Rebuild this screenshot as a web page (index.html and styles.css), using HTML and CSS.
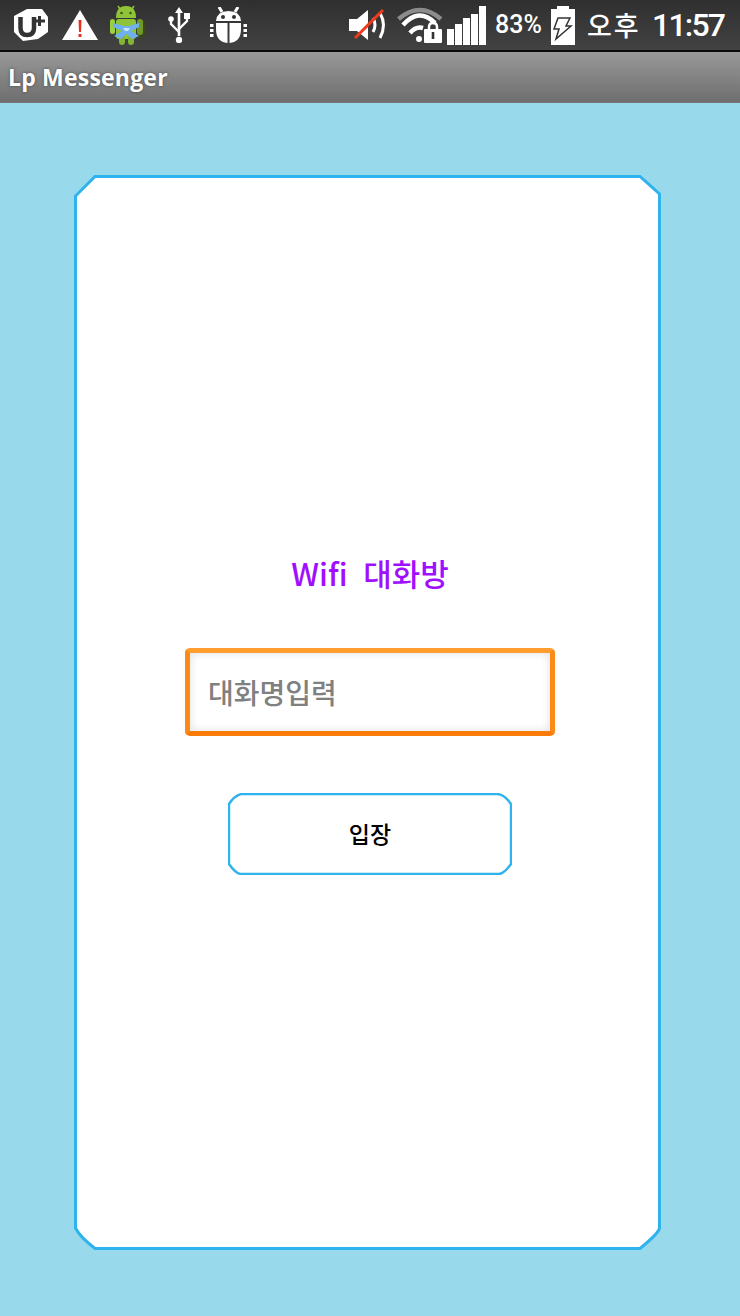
FILE: index.html
```html
<!DOCTYPE html>
<html lang="ko">
<head>
  <meta charset="UTF-8" />
  <title>Lp Messenger</title>
  <link rel="stylesheet" href="styles.css">
</head>
<body>

  <!-- Status bar -->
  <div class="status-bar">
    <div class="status-left">
      <svg class="ic-uplus" viewBox="0 0 36 34">
        <path fill="#fff" d="M1 8 L14 1 L29 1 L35 9 L35 24 L25 31 L10 33 L1 24 Z"/>
        <path fill="none" stroke="#333" stroke-width="4.500" d="M7.500 9 V20 Q7.500 27 14 27 Q21 27 21 20 V9"/>
        <path fill="none" stroke="#333" stroke-width="3" d="M21 13 H32 M26.500 8 V18"/>
      </svg>
      <svg class="ic-warn" viewBox="0 0 36 30">
        <path fill="#fff" d="M18 0 L36 30 H0 Z"/>
        <path fill="#e8321c" d="M16.500 10 H19.500 L19 22 H17 Z M16.500 24 H19.500 V27 H16.500 Z"/>
      </svg>
      <svg class="ic-droid" viewBox="0 0 36 40">
        <ellipse cx="31" cy="24" rx="5" ry="10" fill="#3c4420"/>
        <path fill="#8fc438" d="M6 13 Q6 1 16 1 Q26 1 26 13 Z"/>
        <path fill="none" stroke="#8fc438" stroke-width="1.500" d="M10 4 L8 1 M22 4 L24 1"/>
        <circle cx="11.500" cy="8" r="1.300" fill="#3f5a14"/>
        <circle cx="20.500" cy="8" r="1.300" fill="#3f5a14"/>
        <rect x="6" y="14" width="20" height="20" rx="3" fill="#8fc438"/>
        <rect x="0" y="14" width="5" height="15" rx="2.500" fill="#9ccf42"/>
        <rect x="27" y="14" width="6" height="16" rx="3" fill="#6f9a2a"/>
        <rect x="9" y="30" width="6" height="10" rx="3" fill="#84b232"/>
        <rect x="18" y="30" width="6" height="10" rx="3" fill="#84b232"/>
        <path fill="#6fb0ee" d="M3 18 L14 21 L19 21 L29 18 L29 22 L21 26 L29 31 L22 34 L16.500 29 L11 34 L4 31 L12 26 L3 22 Z"/>
        <path fill="#cfe4fa" d="M13 23 H20 L18 26 H15 Z"/>
      </svg>
      <svg class="ic-usb" viewBox="0 0 22 36">
        <path fill="#fff" d="M11 0 L15 6 H12.300 V29 H9.700 V6 H7 Z"/>
        <circle cx="11" cy="33" r="3.200" fill="#fff"/>
        <circle cx="3" cy="12" r="2.800" fill="#fff"/>
        <rect x="16" y="6" width="6" height="6" fill="#fff"/>
        <path fill="none" stroke="#fff" stroke-width="2.400" d="M3 13 V17 L11 25 M19 11 V14 L11 22"/>
      </svg>
      <svg class="ic-bug" viewBox="0 0 37 36">
        <path fill="#fff" d="M6 14 Q7 4 18.500 4 Q30 4 31 14 Z"/>
        <path fill="none" stroke="#fff" stroke-width="3" d="M12 5 L9 0 M25 5 L28 0"/>
        <circle cx="13" cy="10" r="2" fill="#333"/>
        <circle cx="24" cy="10" r="2" fill="#333"/>
        <path fill="#fff" d="M6 16 H17.500 V36 Q6 35 6 22 Z M31 16 H19.500 V36 Q31 35 31 22 Z"/>
        <path fill="#fff" d="M0 17 H3.500 V20 H0 Z M0 22 H3.500 V25 H0 Z M0 27 H3.500 V30 H0 Z M33.500 17 H37 V20 H33.500 Z M33.500 22 H37 V25 H33.500 Z M33.500 27 H37 V30 H33.500 Z"/>
      </svg>
    </div>
    <div class="status-right">
      <svg class="ic-sound" viewBox="0 0 40 32">
        <path fill="#fff" d="M0 10 H8 L19 1 V31 L8 22 H0 Z"/>
        <path fill="none" stroke="#fff" stroke-width="3" d="M24 9 Q28 16 24 23 M31 4 Q38 16 31 29"/>
        <path fill="none" stroke="#f0391c" stroke-width="3" d="M6 29 L34 1"/>
      </svg>
      <svg class="ic-wifi" viewBox="0 0 46 36">
        <path fill="none" stroke="#8c8c8c" stroke-width="4.500" d="M1.500 12 Q23 -6 44 12"/>
        <path fill="none" stroke="#fff" stroke-width="4.500" d="M6 18 Q22 0 38 16 M13 26 Q19 19 26 21"/>
        <circle cx="22" cy="32" r="3" fill="#fff"/>
        <path fill="none" stroke="#fff" stroke-width="2.500" d="M32 23 V20 Q32 16 36 16 Q40 16 40 20 V23"/>
        <rect x="27" y="22" width="18" height="14" rx="1" fill="#fff"/>
        <rect x="34.700" y="25" width="2.600" height="7" fill="#333"/>
      </svg>
      <div class="signal">
        <span class="sig-a"></span><span class="sig-b"></span><span class="sig-c"></span><span class="sig-d"></span><span class="sig-e"></span>
      </div>
      <span class="battery-pct">83%</span>
      <svg class="ic-battery" viewBox="0 0 24 39">
        <path fill="#fff" d="M6 0 H18 V3 H24 V39 H0 V3 H6 Z"/>
        <path fill="#fff" stroke="#333" stroke-width="1.500" d="M7 12 H19 L15 20 H20 L5 33 L8 23 H3 Z"/>
      </svg>
      <span class="ampm">오후</span>
      <span class="clock">11:57</span>
    </div>
  </div>

  <!-- Title bar -->
  <div class="title-bar">Lp Messenger</div>

  <!-- Main -->
  <div class="main">
    <div class="card">
      <svg class="card-frame" viewBox="0 0 587 1075" preserveAspectRatio="none">
        <path d="M21 1.500 H566 L585.500 19 V1053 Q585 1058 566 1073.500 H21 Q6 1062 1.500 1053 V21 Z" fill="#fff" stroke="#2fb3ec" stroke-width="3"/>
      </svg>
      <h1 class="room-title">Wifi 대화방</h1>
      <div class="name-input">대화명입력</div>
      <div class="enter-btn">
        <svg class="btn-frame" viewBox="0 0 284 82" preserveAspectRatio="none">
          <path d="M13 1 H269 Q276 1 283 11 V71 Q276 81 271 81 H13 Q8 81 1 71 V11 Q6 3 13 1 Z" fill="#fff" stroke="#2fb3ec" stroke-width="2.400"/>
        </svg>
        <span class="btn-label">입장</span>
      </div>
    </div>
  </div>

</body>
</html>
```

FILE: styles.css
```css
html, body {
  margin: 0;
  padding: 0;
}

body {
  width: 740px;
  height: 1316px;
  overflow: hidden;
  background: #98d9eb;
  font-family: "Noto Sans CJK KR", "Noto Sans", sans-serif;
}

svg {
  display: block;
  flex: none;
}

/* Status bar */
.status-bar {
  height: 50px;
  display: flex;
  justify-content: space-between;
  align-items: center;
  background: linear-gradient(#2f2f2f, #424242);
  border-bottom: 2px solid #0c0c0c;
  color: #fff;
}

.status-left, .status-right {
  display: flex;
  align-items: center;
}

.status-left {
  padding-left: 13px;
}

.status-right {
  padding-right: 15px;
}

.ic-uplus { width: 36px; height: 34px; }
.ic-warn { width: 36px; height: 30px; margin-left: 13px; }
.ic-droid { width: 36px; height: 40px; margin-left: 12px; filter: blur(0.6px); }
.ic-usb { width: 22px; height: 36px; margin-left: 22px; }
.ic-bug { width: 37px; height: 36px; margin-left: 20px; }

.ic-sound { width: 40px; height: 32px; }
.ic-wifi { width: 46px; height: 36px; margin-left: 8px; }
.ic-battery { width: 24px; height: 39px; margin-left: 10px; }

.signal {
  height: 39px;
  margin-left: 4px;
  display: flex;
  align-items: flex-end;
  gap: 1px;
}

.signal span {
  width: 7px;
  background: #fff;
}

.sig-a { height: 16px; }
.sig-b { height: 21px; }
.sig-c { height: 27px; }
.sig-d { height: 31px; }
.sig-e { height: 39px; }

.battery-pct {
  width: 46px;
  margin-left: 9px;
  font-family: Roboto, sans-serif;
  font-weight: 500;
  font-size: 25px;
  line-height: 30px;
  white-space: nowrap;
}

.ampm {
  width: 54px;
  margin-left: 12px;
  font-weight: 500;
  font-size: 27px;
  letter-spacing: 2px;
  line-height: 30px;
  white-space: nowrap;
}

.clock {
  width: 73px;
  margin-left: 11px;
  font-family: Roboto, sans-serif;
  font-weight: 500;
  font-size: 32px;
  letter-spacing: -1.800px;
  line-height: 36px;
  white-space: nowrap;
}

/* Title bar */
.title-bar {
  height: 50px;
  padding-left: 8px;
  line-height: 50px;
  background: linear-gradient(#999999, #6e6e6e);
  border-bottom: 1px solid #777;
  color: #fff;
  font-family: "Open Sans", sans-serif;
  font-weight: 700;
  font-size: 23px;
  letter-spacing: 0.200px;
  text-shadow: 0 0 3px #444;
}

/* Main */
.main {
  padding: 72px 79px 0 74px;
}

.card {
  position: relative;
  box-sizing: border-box;
  width: 587px;
  height: 1075px;
  padding-left: 5px;
  display: flex;
  flex-direction: column;
  align-items: center;
}

.card-frame {
  position: absolute;
  top: 0;
  left: 0;
  width: 100%;
  height: 100%;
}

.room-title {
  position: relative;
  margin: 374px 0 0;
  height: 48px;
  line-height: 48px;
  font-size: 31px;
  font-weight: 500;
  word-spacing: 7px;
  color: #a00fff;
}

.name-input {
  position: relative;
  box-sizing: border-box;
  width: 370px;
  height: 88px;
  margin-top: 51px;
  padding-left: 18px;
  line-height: 78px;
  border: 5px solid;
  border-color: #ff9e2e #fb8a18 #f97c08;
  border-radius: 5px;
  background: #fff;
  box-shadow: inset 0 0 8px #ddd;
  color: #808080;
  font-size: 28px;
  font-weight: 500;
}

.enter-btn {
  position: relative;
  width: 284px;
  height: 82px;
  margin-top: 57px;
  display: flex;
  align-items: center;
  justify-content: center;
}

.btn-frame {
  position: absolute;
  top: 0;
  left: 0;
  width: 100%;
  height: 100%;
}

.btn-label {
  position: relative;
  top: -1px;
  font-size: 23px;
  font-weight: 500;
  color: #000;
}
```
